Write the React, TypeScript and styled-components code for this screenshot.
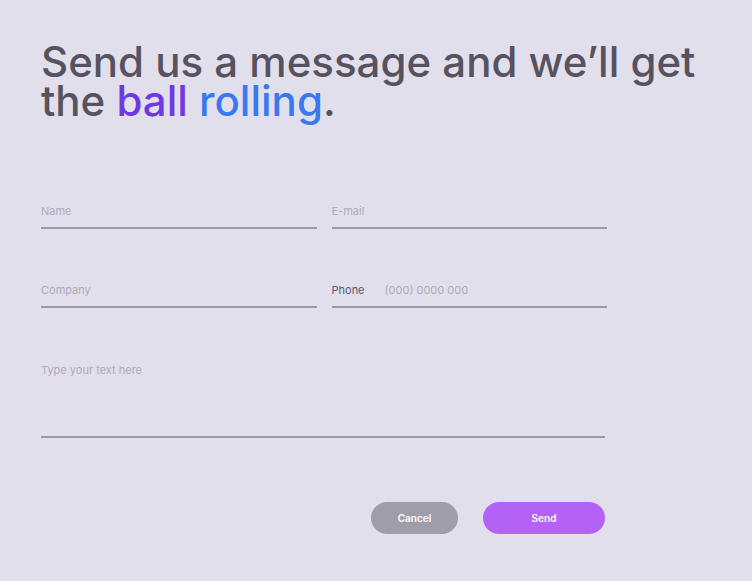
import React from "react";
import styled, { createGlobalStyle } from "styled-components";

const GlobalStyle = createGlobalStyle`
  html, body {
    margin: 0;
    padding: 0;
    background: #e2dfec;
  }

  body {
    font-family: Inter, "Noto Sans", sans-serif;
  }
`;

const Page = styled.main`
  width: 752px;
  min-height: 581px;
  box-sizing: border-box;
  padding: 42px 0 0 41px;
  background: #e2dfec;
`;

const Heading = styled.h1`
  margin: 0;
  width: 690px;
  font-family: Inter, "Noto Sans", sans-serif;
  font-size: 42px;
  line-height: 39px;
  font-weight: 500;
  letter-spacing: 0;
  color: #56525f;
`;

const Line = styled.span`
  display: block;
  height: 39px;
`;

const Accent = styled.span<{ $tone: "purple" | "blue" }>`
  color: ${({ $tone }) => ($tone === "purple" ? "#6e38e2" : "#3a78f0")};
`;

const Form = styled.form`
  margin-top: 84px;
  width: 566px;
`;

const Grid = styled.div`
  display: grid;
  grid-template-columns: 1fr 1fr;
  column-gap: 15px;
  row-gap: 54px;
`;

const Field = styled.label<{ $tall?: boolean }>`
  display: flex;
  align-items: flex-start;
  gap: 20px;
  height: ${({ $tall }) => ($tall ? "75px" : "25px")};
  border-bottom: 2px solid #9c98a7;
  box-sizing: border-box;
`;

const Label = styled.span`
  font-size: 11px;
  line-height: 14px;
  color: #5c5866;
`;

const Input = styled.input`
  flex: 1;
  min-width: 0;
  border: none;
  background: transparent;
  padding: 0;
  outline: none;
  font-family: Inter, "Noto Sans", sans-serif;
  font-size: 11px;
  line-height: 14px;
  color: #56525f;

  &::placeholder {
    color: #aeaab8;
  }
`;

const TextArea = styled.textarea`
  flex: 1;
  height: 100%;
  border: none;
  background: transparent;
  padding: 0;
  resize: none;
  outline: none;
  font-family: Inter, "Noto Sans", sans-serif;
  font-size: 11px;
  line-height: 14px;
  color: #56525f;

  &::placeholder {
    color: #aeaab8;
  }
`;

const MessageWrap = styled.div`
  margin-top: 55px;
  width: 564px;
`;

const Actions = styled.div`
  display: flex;
  justify-content: flex-end;
  gap: 25px;
  width: 564px;
  margin-top: 64px;
`;

const Button = styled.button<{ $primary?: boolean }>`
  height: 32px;
  width: ${({ $primary }) => ($primary ? "122px" : "87px")};
  border: none;
  border-radius: 16px;
  background: ${({ $primary }) => ($primary ? "#b462f5" : "#a09dab")};
  color: #ffffff;
  font-family: Inter, "Noto Sans", sans-serif;
  font-size: 10px;
  font-weight: 600;
  cursor: pointer;
`;

function App() {
  return (
    <Page>
      <GlobalStyle />
      <Heading>
        <Line>Send us a message and we’ll get</Line>
        <Line>
          the <Accent $tone="purple">ball</Accent>{" "}
          <Accent $tone="blue">rolling</Accent>.
        </Line>
      </Heading>
      <Form onSubmit={(e) => e.preventDefault()}>
        <Grid>
          <Field>
            <Input placeholder="Name" name="name" />
          </Field>
          <Field>
            <Input placeholder="E-mail" name="email" />
          </Field>
          <Field>
            <Input placeholder="Company" name="company" />
          </Field>
          <Field>
            <Label>Phone</Label>
            <Input placeholder="(000) 0000 000" name="phone" />
          </Field>
        </Grid>
        <MessageWrap>
          <Field $tall>
            <TextArea placeholder="Type your text here" name="message" />
          </Field>
        </MessageWrap>
        <Actions>
          <Button type="button">Cancel</Button>
          <Button type="submit" $primary>
            Send
          </Button>
        </Actions>
      </Form>
    </Page>
  );
}

export default App;
